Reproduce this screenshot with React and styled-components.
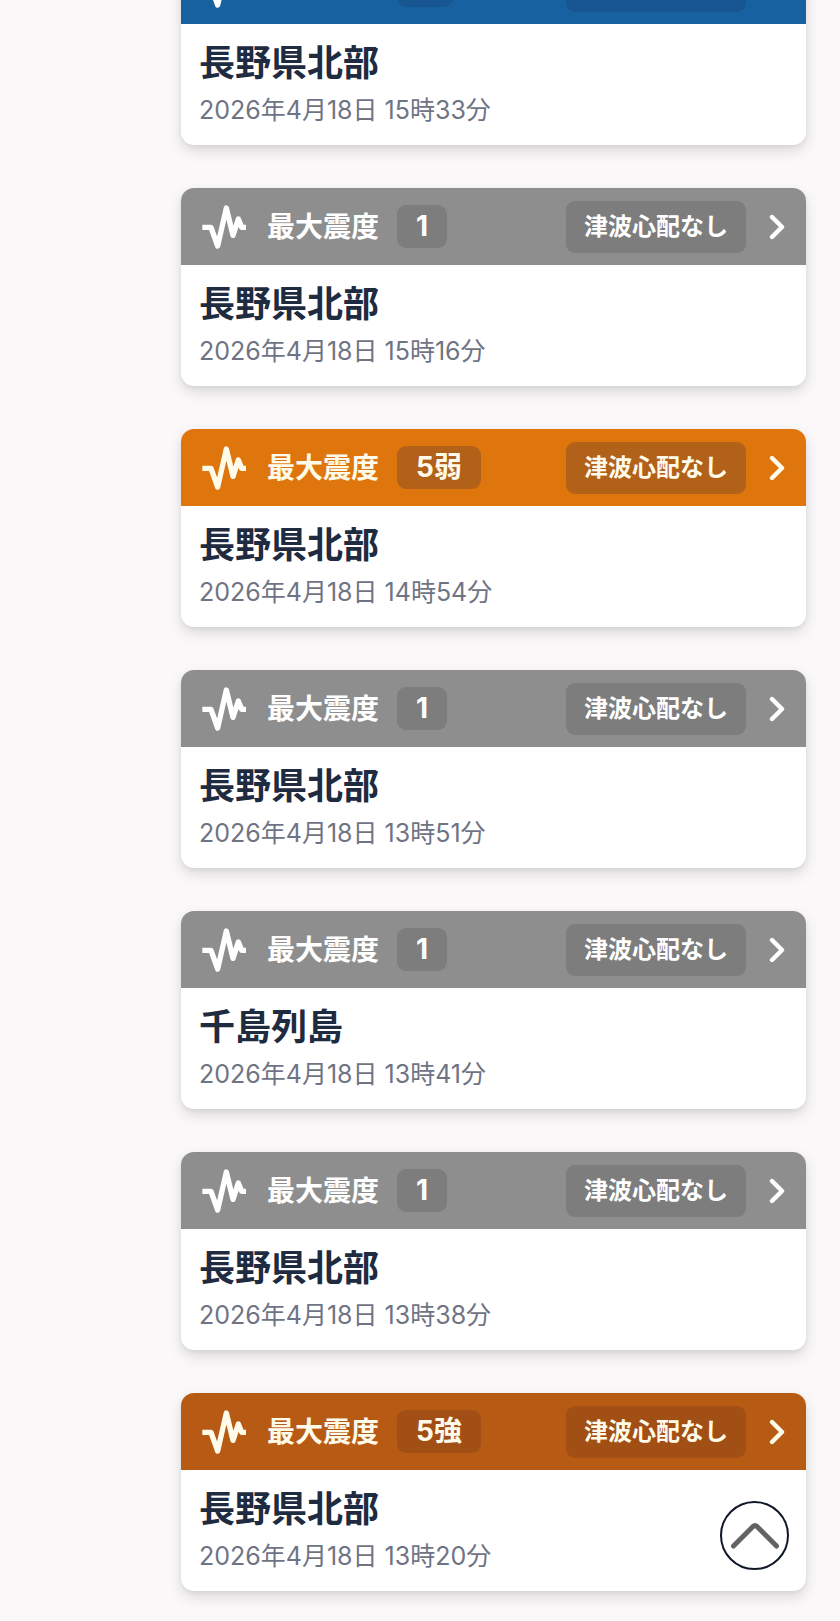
import React from 'react'
import styled, { createGlobalStyle } from 'styled-components'

const levels = {
  gray: { background: '#8e8e8e', badge: '#7d7d7d', text: '#ffffff' },
  blue: { background: '#1761a0', badge: '#175690', text: '#ffffff' },
  orange: { background: '#de760d', badge: '#b26118', text: '#fffbeb' },
  brown: { background: '#b75a14', badge: '#a14f14', text: '#fffbeb' }
}

const quakes = [
  { id: 1, level: 'blue', intensity: '3', place: '長野県北部', time: '2026年4月18日 15時33分' },
  { id: 2, level: 'gray', intensity: '1', place: '長野県北部', time: '2026年4月18日 15時16分' },
  { id: 3, level: 'orange', intensity: '5弱', place: '長野県北部', time: '2026年4月18日 14時54分' },
  { id: 4, level: 'gray', intensity: '1', place: '長野県北部', time: '2026年4月18日 13時51分' },
  { id: 5, level: 'gray', intensity: '1', place: '千島列島', time: '2026年4月18日 13時41分' },
  { id: 6, level: 'gray', intensity: '1', place: '長野県北部', time: '2026年4月18日 13時38分' },
  { id: 7, level: 'brown', intensity: '5強', place: '長野県北部', time: '2026年4月18日 13時20分' }
]

export default function App () {
  return (
    <>
      <GlobalStyle />
      <Page>
        <QuakeList>
          {quakes.map(quake => <QuakeItem key={quake.id} quake={quake} />)}
        </QuakeList>
        <TopButton type="button" aria-label="ページの先頭へ" onClick={() => window.scrollTo(0, 0)}>
          <svg width="50" height="30" viewBox="0 0 50 30" fill="none" aria-hidden="true">
            <path d="M3.5 25 L23 5.5 Q25 3.8 27 5.5 L46.5 25" stroke="#636363" strokeWidth="5" strokeLinecap="round" strokeLinejoin="round" />
          </svg>
        </TopButton>
      </Page>
    </>
  )
}

function QuakeItem ({ quake }) {
  const level = levels[quake.level]

  return (
    <li>
      <Card href={`#quake-${quake.id}`}>
        <CardHeader $level={level}>
          <PulseIcon />
          <Label>最大震度</Label>
          <Intensity $level={level}>{quake.intensity}</Intensity>
          <Tsunami $level={level}>津波心配なし</Tsunami>
          <ChevronIcon />
        </CardHeader>
        <CardBody>
          <Place>{quake.place}</Place>
          <Time>{quake.time}</Time>
        </CardBody>
      </Card>
    </li>
  )
}

function PulseIcon () {
  return (
    <svg width="44" height="44" viewBox="0 0 132 132" fill="none" aria-hidden="true">
      <path d="M1 67 H27 L47 123 L73 9 L93 91 L109 42 L119 67 H132" stroke="currentColor" strokeWidth="16" strokeLinejoin="round" />
    </svg>
  )
}

function ChevronIcon () {
  return (
    <svg width="16" height="26" viewBox="0 0 16 26" fill="none" aria-hidden="true">
      <path d="M3 3 L13 13 L3 23" stroke="currentColor" strokeWidth="4.4" strokeLinecap="round" strokeLinejoin="round" />
    </svg>
  )
}

const GlobalStyle = createGlobalStyle`
  * {
    box-sizing: border-box;
  }

  body {
    margin: 0;
    background: #faf8f9;
    font-family: Inter, "Noto Sans CJK JP", sans-serif;
  }
`

const Page = styled.main`
  min-height: 100vh;
  padding: 0 34px 24px 181px;
  overflow: hidden;
`

const QuakeList = styled.ul`
  display: flex;
  flex-direction: column;
  gap: 43px;
  margin: -53px 0 0;
  padding: 0;
  list-style: none;
`

const Card = styled.a`
  display: block;
  overflow: hidden;
  border-radius: 13px;
  background: #fff;
  box-shadow: 0 6px 14px rgba(0, 0, 0, 0.13), 0 2px 4px rgba(0, 0, 0, 0.05);
  color: inherit;
  text-decoration: none;
`

const CardHeader = styled.div`
  display: flex;
  align-items: center;
  height: 77px;
  padding: 0 21px;
  background: ${props => props.$level.background};
  color: ${props => props.$level.text};
`

const Label = styled.span`
  margin-left: 21px;
  font-size: 28px;
  font-weight: 600;
  line-height: 40px;
`

const Intensity = styled.span`
  margin-left: 18px;
  padding: 0 19px;
  border-radius: 9px;
  background: ${props => props.$level.badge};
  font-size: 28px;
  font-weight: 700;
  line-height: 43px;
`

const Tsunami = styled.span`
  margin: 0 23px 0 auto;
  padding: 0 18px;
  border-radius: 9px;
  background: ${props => props.$level.badge};
  font-size: 24px;
  font-weight: 600;
  line-height: 52px;
`

const CardBody = styled.div`
  padding: 15px 18px 17px;
`

const Place = styled.h2`
  margin: 0;
  color: #1f2b40;
  font-size: 36px;
  font-weight: 600;
  line-height: 48px;
`

const Time = styled.p`
  margin: 5px 0 0;
  color: #6f7484;
  font-size: 25px;
  font-weight: 400;
  line-height: 36px;
`

const TopButton = styled.button`
  position: fixed;
  right: 51px;
  bottom: 51px;
  display: flex;
  align-items: center;
  justify-content: center;
  width: 69px;
  height: 69px;
  padding: 0;
  border: 2px solid #101828;
  border-radius: 50%;
  background: #fff;
  cursor: pointer;
`
